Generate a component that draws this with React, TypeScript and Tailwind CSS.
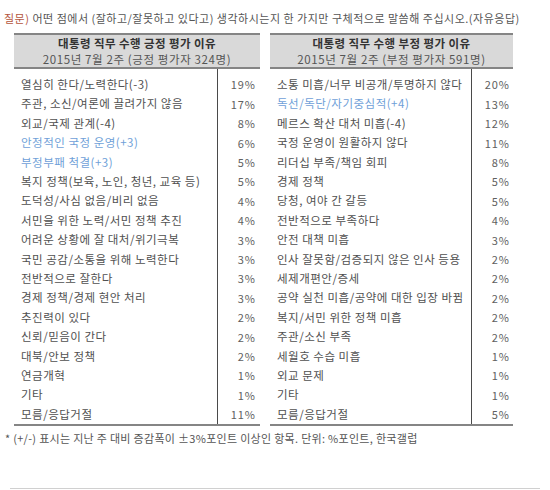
import React from "react";

type Row = { label: string; pct: string; blue?: boolean };

const positive: Row[] = [
  { label: "열심히 한다/노력한다(-3)", pct: "19%" },
  { label: "주관, 소신/여론에 끌려가지 않음", pct: "17%" },
  { label: "외교/국제 관계(-4)", pct: "8%" },
  { label: "안정적인 국정 운영(+3)", pct: "6%", blue: true },
  { label: "부정부패 척결(+3)", pct: "5%", blue: true },
  { label: "복지 정책(보육, 노인, 청년, 교육 등)", pct: "5%" },
  { label: "도덕성/사심 없음/비리 없음", pct: "4%" },
  { label: "서민을 위한 노력/서민 정책 추진", pct: "4%" },
  { label: "어려운 상황에 잘 대처/위기극복", pct: "3%" },
  { label: "국민 공감/소통을 위해 노력한다", pct: "3%" },
  { label: "전반적으로 잘한다", pct: "3%" },
  { label: "경제 정책/경제 현안 처리", pct: "3%" },
  { label: "추진력이 있다", pct: "2%" },
  { label: "신뢰/믿음이 간다", pct: "2%" },
  { label: "대북/안보 정책", pct: "2%" },
  { label: "연금개혁", pct: "1%" },
  { label: "기타", pct: "1%" },
  { label: "모름/응답거절", pct: "11%" },
];

const negative: Row[] = [
  { label: "소통 미흡/너무 비공개/투명하지 않다", pct: "20%" },
  { label: "독선/독단/자기중심적(+4)", pct: "13%", blue: true },
  { label: "메르스 확산 대처 미흡(-4)", pct: "12%" },
  { label: "국정 운영이 원활하지 않다", pct: "11%" },
  { label: "리더십 부족/책임 회피", pct: "8%" },
  { label: "경제 정책", pct: "5%" },
  { label: "당청, 여야 간 갈등", pct: "5%" },
  { label: "전반적으로 부족하다", pct: "4%" },
  { label: "안전 대책 미흡", pct: "3%" },
  { label: "인사 잘못함/검증되지 않은 인사 등용", pct: "2%" },
  { label: "세제개편안/증세", pct: "2%" },
  { label: "공약 실천 미흡/공약에 대한 입장 바뀜", pct: "2%" },
  { label: "복지/서민 위한 정책 미흡", pct: "2%" },
  { label: "주관/소신 부족", pct: "2%" },
  { label: "세월호 수습 미흡", pct: "1%" },
  { label: "외교 문제", pct: "1%" },
  { label: "기타", pct: "1%" },
  { label: "모름/응답거절", pct: "5%" },
];

function Table({
  title,
  sub,
  rows,
  width,
  pctWidth,
  pctPad,
}: {
  title: string;
  sub: string;
  rows: Row[];
  width: string;
  pctWidth: string;
  pctPad: string;
}) {
  return (
    <div className={`flex flex-col ${width}`}>
      <div className="flex h-[36px] flex-col items-center justify-center border-y-2 border-[#858585] bg-[#d9d9d9] leading-[16px]">
        <div className="text-[11.5px] font-bold tracking-[0.4px] text-[#333]">{title}</div>
        <div className="text-[11.5px] tracking-[0.6px] text-[#555]">{sub}</div>
      </div>
      <div className="flex border-b-2 border-[#858585]">
        <div className="flex flex-1 flex-col border-r border-[#4a4a4a] pt-[6px]">
          {rows.map((r, i) => (
            <div
              key={i}
              className={`flex h-[19.4px] items-center whitespace-nowrap pl-[7px] text-[11.5px] tracking-[0.5px] ${
                r.blue ? "text-[#6f9fd8]" : "text-[#505050]"
              }`}
            >
              {r.label}
            </div>
          ))}
        </div>
        <div className={`flex ${pctWidth} flex-col pt-[6px]`}>
          {rows.map((r, i) => (
            <div
              key={i}
              className={`flex h-[19.4px] items-center justify-end ${pctPad} text-[11px] tracking-[1px] text-[#606060]`}
            >
              {r.pct}
            </div>
          ))}
        </div>
      </div>
    </div>
  );
}

export default function App() {
  return (
    <div
      className="h-[490px] w-[550px] bg-white"
      style={{ fontFamily: '"Noto Sans CJK KR", "Noto Sans", sans-serif' }}
    >
      <div className="whitespace-nowrap pl-[4px] pt-[10px] text-[11px] leading-[16px] tracking-[0.5px] text-[#555]">
        <span className="text-[#b4553c]">질문)</span> 어떤 점에서 (잘하고/잘못하고 있다고) 생각하시는지 한 가지만 구체적으로 말씀해 주십시오.(자유응답)
      </div>
      <div className="mt-[7px] flex gap-[10px] pl-[14px]">
        <Table
          title="대통령 직무 수행 긍정 평가 이유"
          sub="2015년 7월 2주 (긍정 평가자 324명)"
          rows={positive}
          width="w-[246px]"
          pctWidth="w-[42px]"
          pctPad="pr-[4px]"
        />
        <Table
          title="대통령 직무 수행 부정 평가 이유"
          sub="2015년 7월 2주 (부정 평가자 591명)"
          rows={negative}
          width="w-[243px]"
          pctWidth="w-[41px]"
          pctPad="pr-[3px]"
        />
      </div>
      <div className="whitespace-nowrap pl-[5px] pt-[4px] text-[11px] leading-[16px] tracking-[0.3px] text-[#555]">
        * (+/-) 표시는 지난 주 대비 증감폭이 ±3%포인트 이상인 항목. 단위: %포인트, 한국갤럽
      </div>
      <div className="mx-[10px] mt-[42px] border-t border-[#d0d0d0]" />
    </div>
  );
}
